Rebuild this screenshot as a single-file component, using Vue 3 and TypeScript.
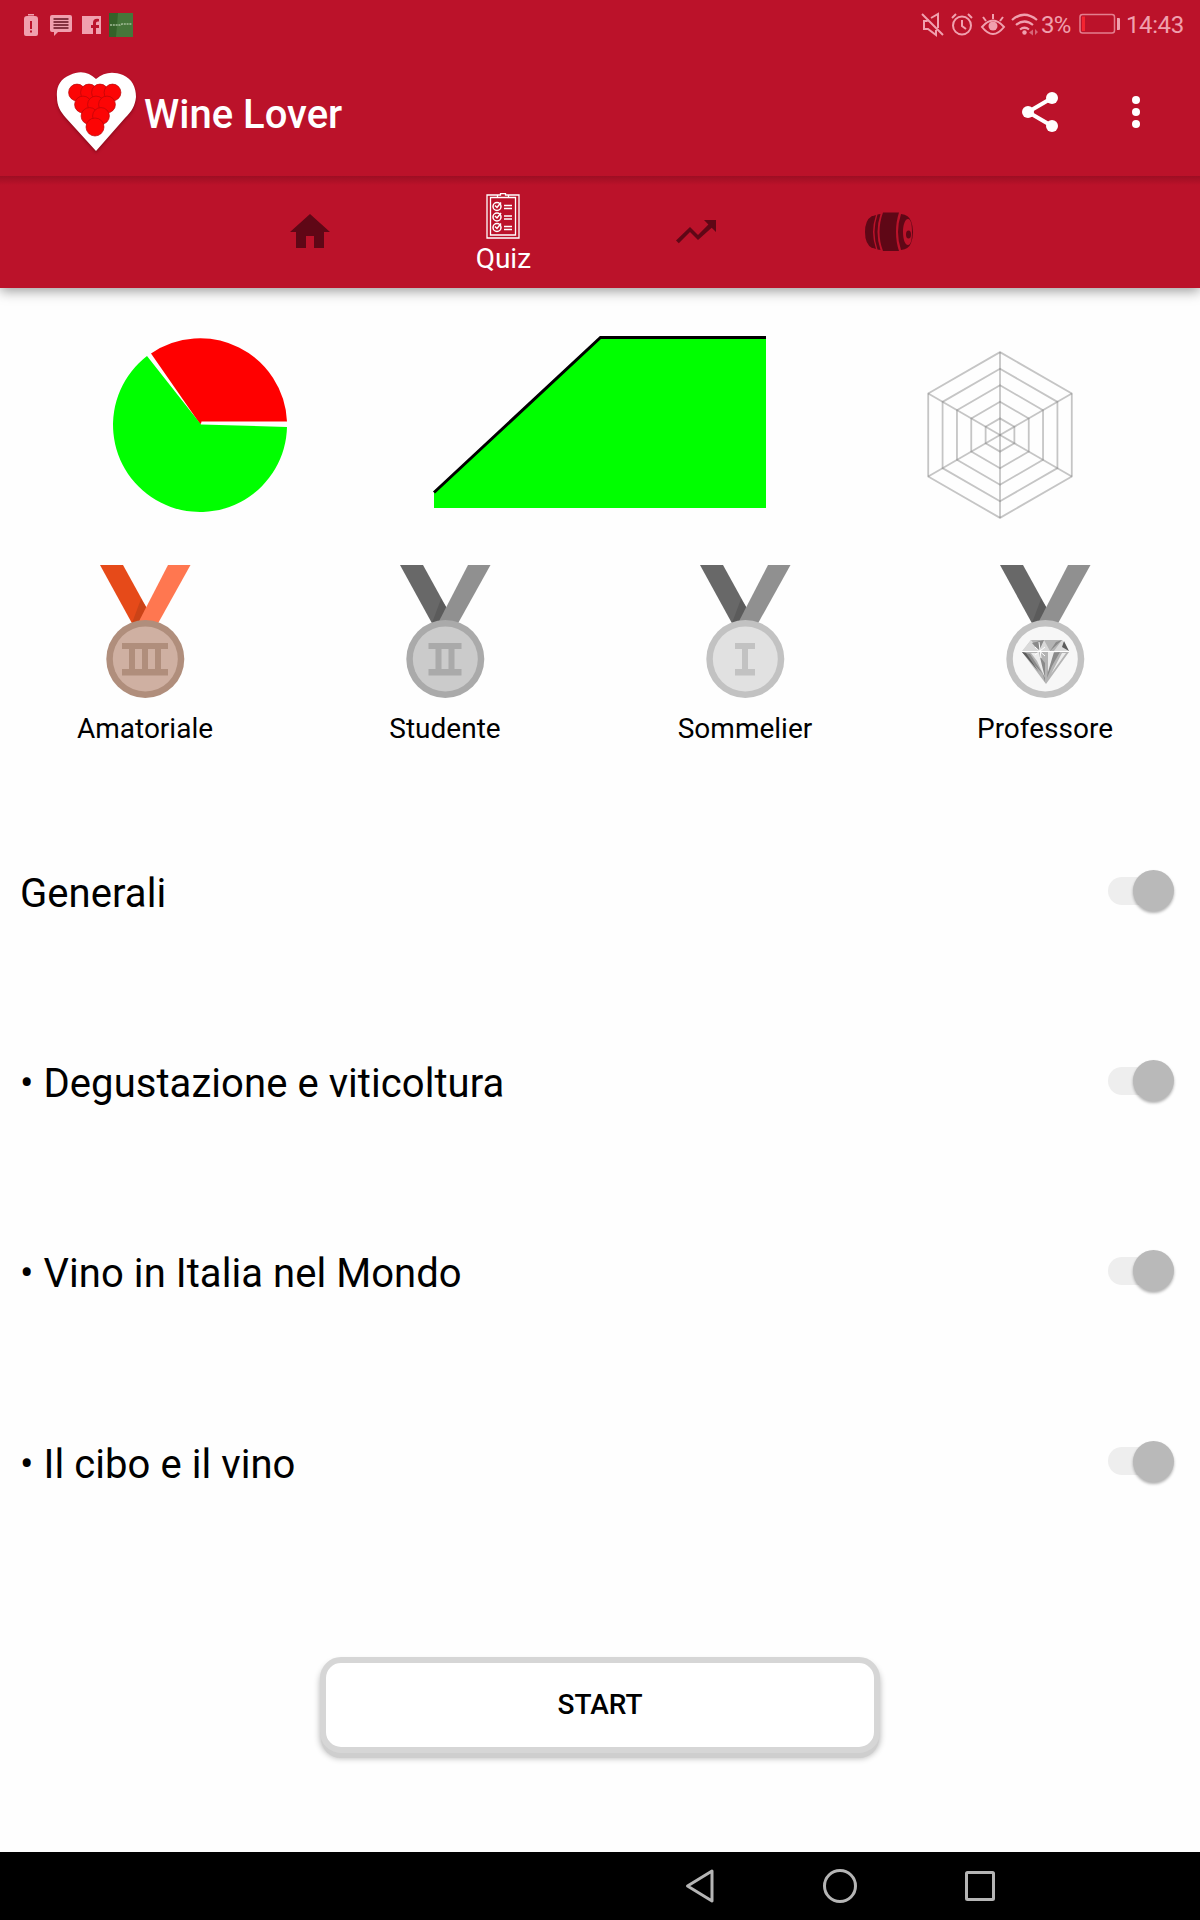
<script setup lang="ts">
interface Medal { name: string; strapDark: string; strapLight: string; strapShade: string; rim: string; face: string; bars: number }

const medals: Medal[] = [
  { name: 'Amatoriale', strapDark: '#e64a19', strapLight: '#ff7750', strapShade: '#cb4317', rim: '#b08e7c', face: '#cfb0a2', bars: 3 },
  { name: 'Studente', strapDark: '#686868', strapLight: '#909090', strapShade: '#5b5b5b', rim: '#aaaaaa', face: '#cbcbcb', bars: 2 },
  { name: 'Sommelier', strapDark: '#686868', strapLight: '#909090', strapShade: '#5b5b5b', rim: '#c2c2c2', face: '#e1e1e1', bars: 1 },
  { name: 'Professore', strapDark: '#686868', strapLight: '#909090', strapShade: '#5b5b5b', rim: '#c2c2c2', face: '#f7f7f7', bars: 0 },
]

const topics: string[] = ['Generali', '• Degustazione e viticoltura', '• Vino in Italia nel Mondo', '• Il cibo e il vino']

const grapes: number[][] = [
  [22, 21.5], [34, 21.5], [45, 21.5], [57.5, 21.5],
  [28, 33.5], [41, 33.5], [52, 33.5],
  [34.5, 45], [46, 45],
  [40, 56],
]

const hexagon = (r: number): string =>
  Array.from({ length: 6 }, (_, i) => {
    const a = (Math.PI / 3) * i - Math.PI / 2
    return `${(84 + r * Math.cos(a)).toFixed(2)},${(84 + r * Math.sin(a)).toFixed(2)}`
  }).join(' ')
const rings: string[] = [16.6, 33.2, 49.7, 66.3, 82.9].map(hexagon)
const spokes: string[] = hexagon(82.9).split(' ')

const barStart = (n: number): number => 45 - (n * 6 + (n - 1) * 7) / 2
</script>

<template>
  <div class="screen">
    <div class="status">
      <svg class="s-batt" width="14" height="24" viewBox="0 0 14 24">
        <path fill="#f0a0ae" fill-rule="evenodd" d="M4 1h6v1.500H4zM3 3h8q3 0 3 3v15q0 2-2 2H2q-2 0-2-2V6q0-3 3-3zM6 8v8h2V8zM6 17.500v2h2v-2z" />
      </svg>
      <svg class="s-msg" width="22" height="24" viewBox="0 0 22 24">
        <path fill="#f0a0ae" d="M2 2h18q2 0 2 2v13q0 2-2 2H8l-4 4v-4H2q-2 0-2-2V4q0-2 2-2z" />
        <path stroke="#62101f" stroke-width="1.300" d="M3.500 6h15M3.500 9h15M3.500 12h15M3.500 15h15" />
      </svg>
      <svg class="s-fb" width="19" height="24" viewBox="0 0 19 24">
        <path fill="#f0a0ae" d="M0 3h19v18h-5v-6h3v-3h-3v-2q0-2 3-1.500V6q-6-1-6 4v2H9v3h2v6H0z" />
      </svg>
      <svg class="s-app" width="24" height="24" viewBox="0 0 24 24">
        <rect width="24" height="24" fill="#46763a" />
        <path fill="#356229" d="M0 0h9L7 24H0z" />
        <path stroke="#a3bd98" stroke-width="1.500" stroke-dasharray="2 .8" fill="none" d="M1 12h10l2-1h10" />
      </svg>
      <span class="spacer"></span>
      <svg class="s-mute" width="22" height="24" viewBox="0 0 22 24" fill="none" stroke="#f0a0ae" stroke-width="2">
        <path d="M0 1l21 21M5 8H2v8h4l8 6V17M9 5l7-4v14M5 8l2-1" />
      </svg>
      <svg class="s-alarm" width="22" height="24" viewBox="0 0 22 24" fill="none" stroke="#f0a0ae" stroke-width="2">
        <circle cx="11" cy="12.500" r="9" /><path d="M11 7v6l4 3M1 5l4-4M21 5l-4-4" />
      </svg>
      <svg class="s-eye" width="24" height="24" viewBox="0 0 24 24" fill="none" stroke="#f0a0ae" stroke-width="2">
        <path d="M1 14q11-13 22 0-11 14-22 0zM12 6V1M5 8L2 4M19 8l3-4" /><circle cx="12" cy="13" r="4.500" fill="#f0a0ae" stroke="none" />
      </svg>
      <svg class="s-wifi" width="28" height="24" viewBox="0 0 28 24" fill="none" stroke="#f0a0ae" stroke-width="2.200">
        <path d="M1 7q12-10.500 25 0M5 12q8.500-7 17 0M9 16.500q4.500-3.500 9 0" /><circle cx="13.500" cy="19.500" r="2.200" fill="#f0a0ae" stroke="none" />
        <path stroke="none" fill="#d76779" d="M18 19.500l4-3v6zM24 16v6l3-3z" />
      </svg>
      <span class="pct">3%</span>
      <svg class="s-charge" width="41" height="24" viewBox="0 0 41 24">
        <rect x="1" y="1.500" width="34.500" height="18.500" rx="2.500" fill="none" stroke="#e37f8f" stroke-width="1.500" />
        <path fill="#f52330" d="M3 3.500h3v14.500H3z" /><path fill="#f0a0ae" d="M38 5h2q1 0 1 1v10q0 1-1 1h-2z" />
      </svg>
      <span class="time">14:43</span>
    </div>

    <header class="bar">
      <svg class="logo" width="88" height="88" viewBox="0 0 88 88">
        <path class="heart" fill="#fff" d="M41 8C34 1 25-1 15 4 5 8 1 16 2 26c0 9 3 14 9 21l30 33 29-33c7-7 10-12 11-21 0-10-4-18-13-22-10-4-19-3-27 4z" />
        <circle v-for="(g, i) in grapes" :key="i" :cx="g[0]" :cy="g[1]" :r="i === 9 ? 9 : 8.400" fill="#fc0505" stroke="#b80609" stroke-width=".7" />
      </svg>
      <h1>Wine Lover</h1>
      <svg class="share" width="38" height="42" viewBox="0 0 38 42">
        <path d="M31 7L7 21l24 14" fill="none" stroke="#fff" stroke-width="4" />
        <g fill="#fff"><circle cx="31" cy="7" r="6" /><circle cx="7" cy="21" r="6" /><circle cx="31" cy="35" r="6" /></g>
      </svg>
      <svg class="more" width="8" height="32" viewBox="0 0 8 32" fill="#fff">
        <circle cx="4" cy="4" r="4" /><circle cx="4" cy="16" r="4" /><circle cx="4" cy="28" r="4" />
      </svg>
    </header>

    <nav class="tabs">
      <div class="tab">
        <svg class="home" width="40" height="36" viewBox="0 0 40 36"><path fill="#5f0716" d="M20 1l20 18h-6v16H24V23h-8v12H6V19H0z" /></svg>
      </div>
      <div class="tab active">
        <svg width="34" height="46" viewBox="0 0 34 46" fill="none" stroke="#fff" stroke-width="1.300">
          <path d="M11.500 2H1v43h32V2H22.500M11.500 4.500H4.500v37.500h25V4.500h-7M11.500 4.500V2h3V.7h5V2h3v2.500z" />
          <g v-for="y in [13.500, 24, 34.500]" :key="y">
            <circle cx="11" :cy="y" r="4" stroke-width="1.500" />
            <path stroke-width="1.500" :d="`M9 ${y - 1}l2 2 4-5`" />
            <path d="M18 0h8M18 3h8" :transform="`translate(0 ${y - 1})`" />
          </g>
        </svg>
        <span>Quiz</span>
      </div>
      <div class="tab">
        <svg class="shifted" width="40" height="24" viewBox="0 0 40 24"><path fill="#5f0716" d="M28 0h12v12l-4.300-4.300L22 20l-8-8L2.800 23.200 0 20.400 14 7l8 8L32.400 4.500z" /></svg>
      </div>
      <div class="tab">
        <svg class="shifted" width="48" height="40" viewBox="0 0 48 40" fill="#5f0716">
          <path d="M7 4Q0 8 0 20t7 16h2q-3-8-3-16T9 4z" />
          <path d="M8 4l3-1Q8 12 8 20t3 17l-3-1Q5 28 5 20T8 4z" />
          <path d="M12.500 2.500l3-.5q-3 9-3 18t3 18l-3-.5q-3-9-3-17.500t3-17.500z" />
          <path d="M18 .5h16q-3 9-3 19.500t3 19H18q-3.500-9-3.500-19T18 .5z" />
          <path fill-rule="evenodd" d="M36 2q8 1 10 7 2 5 2 11t-2 11q-2 6-10 7-3-9-3-18t3-18zM43 7c-3 0-5 6-5 13s2 13 5 13 4-6 4-13-1-13-4-13z" />
          <ellipse cx="43.500" cy="22.500" rx="2.500" ry="4" />
        </svg>
      </div>
    </nav>

    <main>
      <section class="charts">
        <svg width="174" height="176" viewBox="0 0 174 176" class="pie">
          <path fill="#f00" d="M87 87L38 16.500A87 87 0 0 1 174 84.500H88.500L88 86.500z" />
          <path fill="#0f0" d="M88 87.500L174 90A87 87 0 1 1 34 19z" />
        </svg>
        <svg width="332" height="176" viewBox="0 0 332 176" class="area">
          <path fill="#0f0" d="M0 156.500L166 1.500H332V172H0z" />
          <path fill="none" stroke="#000" stroke-width="3" d="M0 156.500L166.500 1.500H332" />
        </svg>
        <svg width="168" height="168" viewBox="0 0 168 168" class="radar" fill="none" stroke="#777" stroke-opacity=".42" stroke-width="1.800">
          <polygon v-for="r in rings" :key="r" :points="r" />
          <polyline v-for="s in spokes" :key="s" :points="`84,84 ${s}`" />
        </svg>
      </section>

      <section class="medals">
        <div v-for="m in medals" :key="m.name" class="medal">
          <svg width="90" height="134" viewBox="0 0 90 134">
            <path :fill="m.strapDark" d="M0 0h23l27 49-16 13z" />
            <path :fill="m.strapShade" d="M41 34L32 58l6 4 8-20z" />
            <path :fill="m.strapLight" d="M68 0h22.500L56 62H36z" />
            <circle cx="45.300" cy="94" r="39" :fill="m.rim" />
            <circle cx="45.300" cy="94" r="32.500" :fill="m.face" />
            <g v-if="m.bars" :fill="m.rim">
              <rect :x="barStart(m.bars) - 7" y="78" :width="m.bars * 6 + (m.bars - 1) * 7 + 14" height="6" />
              <rect :x="barStart(m.bars) - 7" y="104" :width="m.bars * 6 + (m.bars - 1) * 7 + 14" height="6.500" />
              <rect v-for="n in m.bars" :key="n" :x="barStart(m.bars) + (n - 1) * 13" y="78" width="6" height="31" />
            </g>
            <g v-else>
              <path fill="#b4b4b4" d="M31 75h31l7 12-23 32L22 87z" />
              <path fill="#d9d9d9" d="M31 75l8 11H22zM44 75l6 11H37zM62 75l-8 11h15z" />
              <path fill="#8a8a8a" d="M44 75l-5 11-7-8zM62 75l-6 2-6 9zM22 87l8 2 13 20zM37 88l8 10v19zM60 87l-8 14-5 12 3-25z" />
              <path fill="#ececec" d="M31 88l6 8 8 17-6-25zM48 87h6l-6 20zM62 88h4L51 109z" />
              <path fill="#5c5c5c" d="M22 87l4 1 13 19zM64 76l5 10-7-4z" />
              <path stroke="#fff" stroke-width="1" d="M22 86.500h47M39 77l2 16M35 90l10-8M35 82l10 9" />
            </g>
          </svg>
          <span>{{ m.name }}</span>
        </div>
      </section>

      <section class="topics">
        <div v-for="t in topics" :key="t" class="topic">
          <span>{{ t }}</span>
          <div class="switch"><i></i></div>
        </div>
      </section>

      <button class="start">START</button>
    </main>

    <footer class="nav">
      <svg width="30" height="34" viewBox="0 0 30 34"><path d="M27 2L2.500 17 27 32z" /></svg>
      <svg width="34" height="34" viewBox="0 0 34 34"><circle cx="17" cy="17" r="15.500" /></svg>
      <svg width="30" height="34" viewBox="0 0 30 34"><rect x="1.500" y="3.500" width="27" height="27" rx="1" /></svg>
    </footer>
  </div>
</template>

<style>
body { margin: 0; background: #fefefe; }
</style>

<style scoped>
.screen { width: 1200px; height: 1920px; display: flex; flex-direction: column; overflow: hidden; background: #fefefe; color: #000; font-family: Roboto, "Liberation Sans", sans-serif; }
svg { display: block; flex: none; overflow: visible; }
.status { height: 48px; flex: none; display: flex; align-items: flex-start; box-sizing: border-box; padding: 13px 15px 0 24px; background: #bb122a; color: #f0a0ae; font-size: 24px; line-height: 24px; }
.s-msg { margin-left: 12px; }
.s-fb { margin-left: 10px; }
.s-app { margin-left: 8px; }
.spacer { flex: 1; }
.s-alarm { margin-left: 7px; }
.s-eye { margin-left: 8px; }
.s-wifi { margin-left: 6px; }
.pct { width: 37px; margin-left: 2px; letter-spacing: -.8px; }
.s-charge { margin-left: 1px; }
.time { width: 59px; margin-left: 6px; letter-spacing: -.4px; }
.bar { position: relative; z-index: 1; height: 128px; flex: none; display: flex; align-items: center; box-sizing: border-box; padding: 0 60px 0 55px; background: #bb122a; }
.logo { margin-top: 5px; }
.heart { filter: drop-shadow(0 2px 1.500px rgba(90, 0, 10, .45)); }
h1 { flex: 1; margin: 6px 0 0 1px; color: #fff; font-size: 40px; font-weight: 500; line-height: 48px; letter-spacing: 0; }
.more { margin-left: 73px; }
.tabs { height: 112px; flex: none; display: flex; box-sizing: border-box; padding: 0 213.500px; background: linear-gradient(#9d0e23, #bb122a 9px); box-shadow: 0 3px 12px rgba(0, 0, 0, .4); }
.tab { flex: 1; display: flex; flex-direction: column; align-items: center; justify-content: center; color: #fff; font-size: 28px; line-height: 32px; }
.tab.active { justify-content: flex-start; padding-top: 17px; }
.tab span { margin-top: 4px; }
.home { margin-bottom: 2px; }
.shifted { margin-right: 2px; }
main { flex: 1; display: flex; flex-direction: column; }
.charts { height: 277px; display: flex; box-sizing: border-box; align-items: flex-start; padding-left: 113px; }
.pie { margin-top: 49px; }
.area { margin: 48px 0 0 147px; }
.radar { margin: 63px 0 0 150px; }
.medals { display: flex; gap: 10px; height: 232px; }
.medal { width: 290px; display: flex; flex-direction: column; align-items: center; font-size: 28px; line-height: 34px; }
.medal span { margin-top: 13px; }
.topic { height: 190.200px; display: flex; align-items: center; justify-content: space-between; padding: 0 26.500px 0 20px; font-size: 40px; letter-spacing: .06px; }
.topic span { padding-top: 3px; }
.switch { width: 65.500px; height: 41px; margin-bottom: 3px; display: flex; align-items: center; }
.switch::before { content: ""; width: 50px; height: 28px; flex: none; border-radius: 14px; background: #eee; }
.switch i { width: 41px; height: 41px; flex: none; margin-left: -25.500px; border-radius: 50%; background: #b9b9b9; box-shadow: 0 2px 3px rgba(0, 0, 0, .3); }
.start { width: 560px; height: 96px; flex: none; margin: 99px auto 0; padding: 0; box-sizing: border-box; border: 6px solid #d6d6d6; border-radius: 21px; background: #fff; box-shadow: 0 6px 0 -1px #cecece, 0 5px 6px rgba(0, 0, 0, .3); color: #000; font: 500 28px Roboto, sans-serif; }
.nav { height: 68px; flex: none; display: flex; align-items: center; justify-content: flex-end; box-sizing: border-box; padding-right: 205px; gap: 108px; background: #000; }
.nav path, .nav circle, .nav rect { fill: none; stroke: #b5b5b5; stroke-width: 3; stroke-linejoin: round; }
</style>
